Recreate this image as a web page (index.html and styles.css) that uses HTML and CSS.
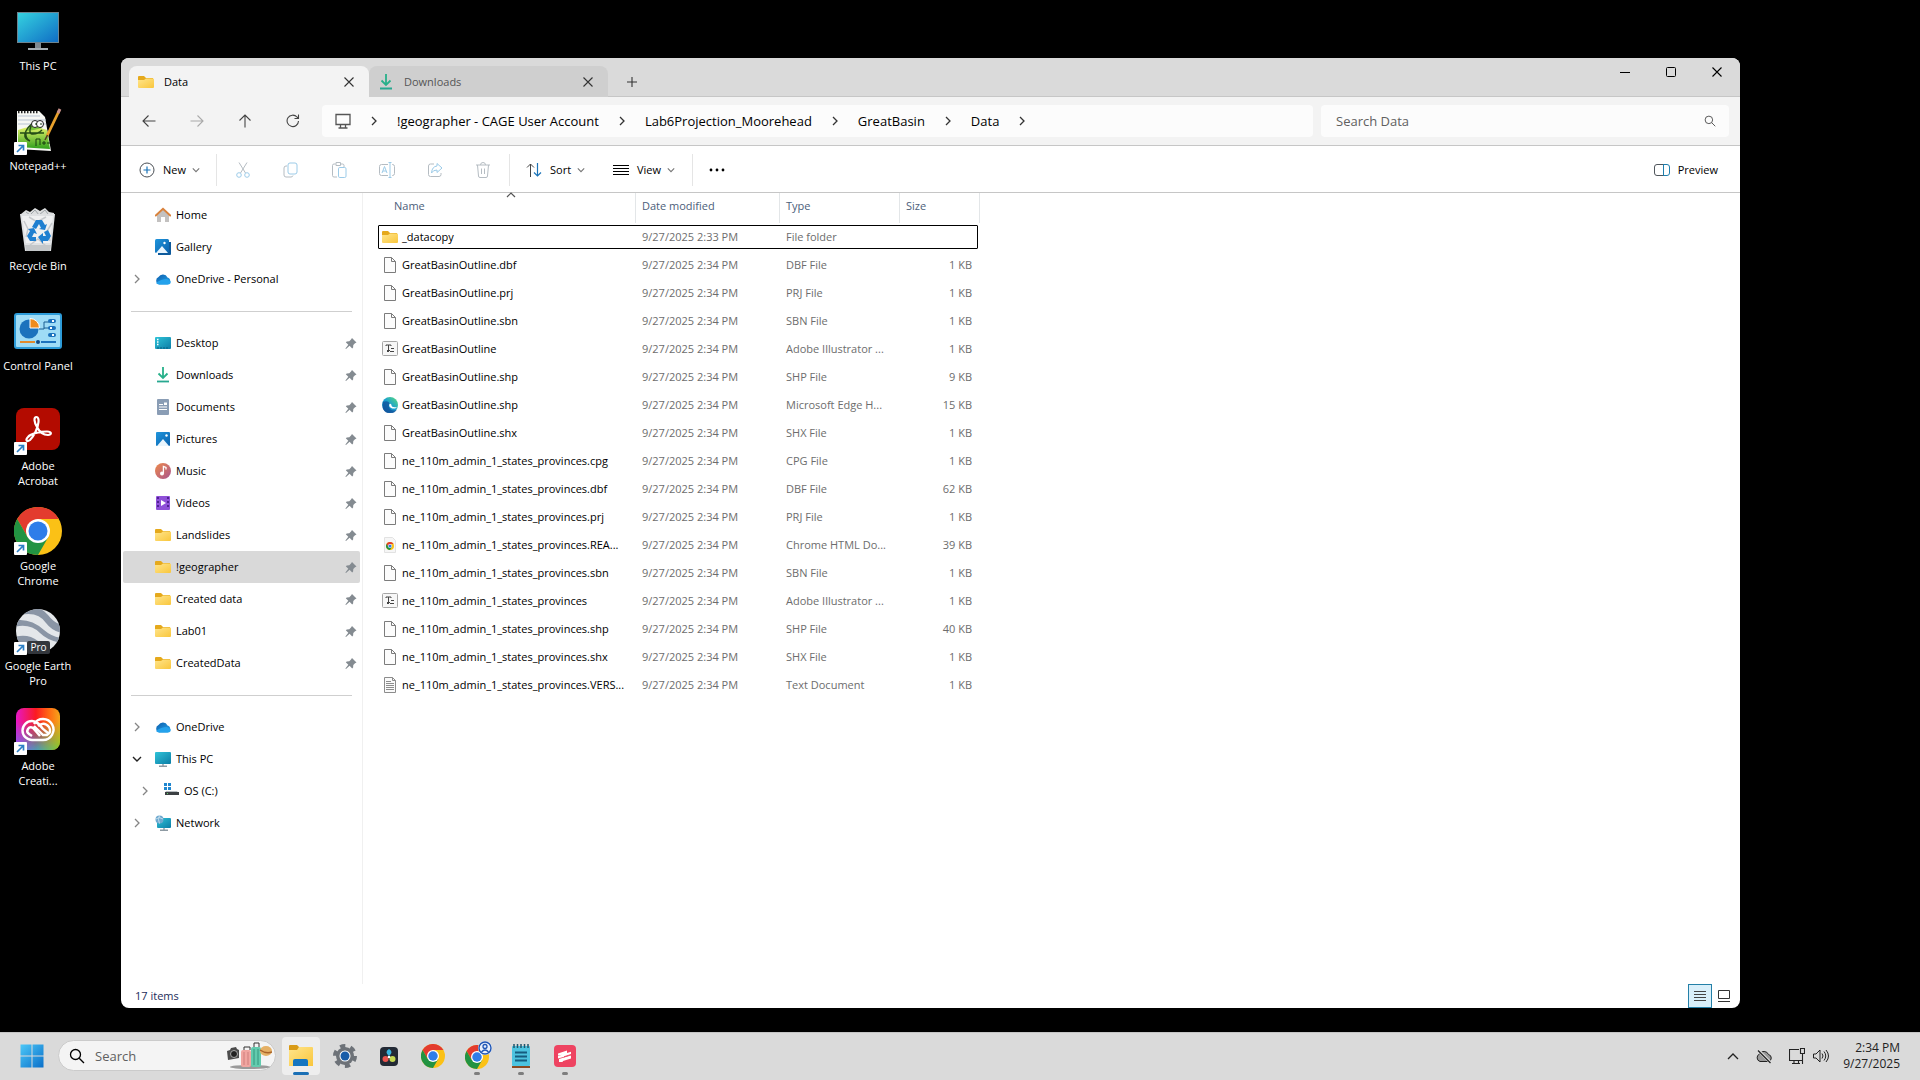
FILE: index.html
```html
<!DOCTYPE html>
<html lang="en">
<head>
<meta charset="utf-8">
<title>Data - File Explorer</title>
<link rel="stylesheet" href="styles.css">
</head>
<body>
<svg class="sprite" aria-hidden="true">
  <defs>
    <linearGradient id="g-folder" x1="0" y1="0" x2="1" y2="1"><stop offset="0" stop-color="#ffe58c"/><stop offset="1" stop-color="#f9c63c"/></linearGradient>
    <linearGradient id="g-screen" x1="0" y1="0" x2="1" y2="1"><stop offset="0" stop-color="#35d3e0"/><stop offset="1" stop-color="#0f6cc4"/></linearGradient>
    <linearGradient id="g-teal" x1="0" y1="0" x2="1" y2="1"><stop offset="0" stop-color="#2fc3d8"/><stop offset="1" stop-color="#0c7da6"/></linearGradient>
    <linearGradient id="g-blue" x1="0" y1="0" x2="1" y2="1"><stop offset="0" stop-color="#1f95dc"/><stop offset="1" stop-color="#0b62ae"/></linearGradient>
    <linearGradient id="g-cloud" x1="0" y1="0" x2="1" y2="1"><stop offset="0" stop-color="#0b5cad"/><stop offset="1" stop-color="#28a8ea"/></linearGradient>
    <linearGradient id="g-music" x1="0" y1="0" x2="1" y2="1"><stop offset="0" stop-color="#ee8a4a"/><stop offset="1" stop-color="#a95590"/></linearGradient>
    <linearGradient id="g-win" x1="0" y1="0" x2="1" y2="1"><stop offset="0" stop-color="#4cc8f8"/><stop offset="1" stop-color="#0a6fc9"/></linearGradient>
    <linearGradient id="g-edge" x1="0" y1="1" x2="1" y2="0"><stop offset="0" stop-color="#0c59a4"/><stop offset=".5" stop-color="#1a9fd0"/><stop offset="1" stop-color="#5ee07a"/></linearGradient>
    <linearGradient id="g-cc" x1="0" y1="0" x2="1" y2="0"><stop offset="0" stop-color="#e617c8"/><stop offset=".45" stop-color="#fb1a22"/><stop offset=".75" stop-color="#ff6a13"/><stop offset="1" stop-color="#f5a51b"/></linearGradient>
    <linearGradient id="g-cc2" x1="0" y1="0" x2="1" y2="0"><stop offset="0" stop-color="#6c6cff"/><stop offset=".5" stop-color="#2fb4c8"/><stop offset="1" stop-color="#72d32a"/></linearGradient>
    <linearGradient id="g-fade" x1="0" y1="0" x2="0" y2="1"><stop offset=".3" stop-color="#000"/><stop offset="1" stop-color="#fff"/></linearGradient>
    <linearGradient id="g-npp" x1="0" y1="0" x2="0" y2="1"><stop offset="0" stop-color="#e3f36b"/><stop offset="1" stop-color="#2e9f1b"/></linearGradient>
    <mask id="m-fade"><rect width="48" height="48" fill="url(#g-fade)"/></mask>
    <clipPath id="c-globe"><circle cx="24" cy="24" r="22"/></clipPath>
  </defs>

  <symbol id="folder" viewBox="0 0 16 16"><path d="M0 3a1 1 0 0 1 1-1h5l2 2h7v6H0z" fill="#e5a91c"/><path d="M0 6h6l2-1.500h7a1 1 0 0 1 1 1V13a1 1 0 0 1-1 1H1a1 1 0 0 1-1-1z" fill="url(#g-folder)"/></symbol>
  <symbol id="download" viewBox="0 0 16 16"><path d="M8 0v10.500M3.500 6.500 8 11l4.500-4.500" fill="none" stroke="#27b08a" stroke-width="1.800"/><path d="M2 14.500h12" stroke="#27a890" stroke-width="1.800"/></symbol>
  <symbol id="home" viewBox="0 0 16 16"><path d="M2 8l6-6 6 6v7h-4v-5H6v5H2z" fill="#c3c1c0"/><path d="M.800 8.500 8 1.800l7.200 6.700" fill="none" stroke="#d9823c" stroke-width="1.900" stroke-linecap="round"/></symbol>
  <symbol id="gallery" viewBox="0 0 16 16"><path d="M13 3h3v12a1 1 0 0 1-1 1H3v-2z" fill="#0d5a9c"/><rect width="14" height="14" rx="1.500" fill="url(#g-blue)"/><path d="M1 14 7 7l6 7z" fill="#e9f5fd"/><circle cx="9.500" cy="4" r="1.200" fill="#fff"/></symbol>
  <symbol id="cloud" viewBox="0 0 16 16"><path d="M4 13.500A4 4 0 0 1 3.500 6 5 5 0 0 1 12.500 6.500 3.600 3.600 0 0 1 12.500 13.500z" fill="url(#g-cloud)"/><path d="M1 12Q6 8 12 8l3.800 2.500a3 3 0 0 1-3.300 3H4A4 4 0 0 1 1 12z" fill="#24a2ec"/></symbol>
  <symbol id="desktop" viewBox="0 0 16 16"><rect y="2" width="16" height="12" rx="1" fill="url(#g-teal)"/><path d="M2 4.500h1.500M2 7h1.500M2 9.500h1.500" stroke="#fff" stroke-width="1.300"/><path d="M2 13h12" stroke="#075d80" stroke-dasharray="2 1"/></symbol>
  <symbol id="document" viewBox="0 0 16 16"><rect x="2" y="0" width="12" height="16" rx="1" fill="#8a9db5"/><path d="M4 5.500h4M4 8h8M4 10.500h8" stroke="#fff" stroke-width="1.200"/><path d="M9 3.500h3v2.500H9z" fill="#fff"/></symbol>
  <symbol id="pictures" viewBox="0 0 16 16"><rect x="1" y="1" width="14" height="14" rx="1" fill="url(#g-blue)"/><path d="M2 15 8 8l6 7z" fill="#e9f5fd"/><circle cx="11.500" cy="4.500" r="1.200" fill="#fff"/></symbol>
  <symbol id="music" viewBox="0 0 16 16"><circle cx="8" cy="8" r="8" fill="url(#g-music)"/><circle cx="7" cy="10.500" r="2" fill="#fff"/><path d="M8.400 10.500V3.500l2.600 1v2" fill="none" stroke="#fff" stroke-width="1.300"/></symbol>
  <symbol id="videos" viewBox="0 0 16 16"><rect x="1" y="1" width="14" height="14" rx="1" fill="#8f50d8"/><path d="M3 2v12M13 2v12" stroke="#4b1d8c" stroke-width="1.800" stroke-dasharray="2 2"/><path d="M6 5v6l5-3z" fill="#fff"/></symbol>
  <symbol id="pc" viewBox="0 0 16 16"><path d="M4 15.300h8M8 13v2" stroke="#8e9aa3" stroke-width="1.400"/><rect y="1" width="16" height="12" rx="1" fill="url(#g-teal)"/></symbol>
  <symbol id="drive" viewBox="0 0 16 16"><path d="M1 0h3v3H1zM5 0h3v3H5zM1 4h3v3H1zM5 4h3v3H5z" fill="#1f86cf"/><path d="M3 8h11l1.500 2H2z" fill="#b7bcc0"/><rect x="2" y="9" width="14" height="3" fill="#3c4043"/><path d="M4 10.500h1" stroke="#5fd66a"/></symbol>
  <symbol id="network" viewBox="0 0 16 16"><path d="M5 15.300h8M9 13v2" stroke="#8e9aa3" stroke-width="1.400"/><rect x="2" y="3" width="14" height="10" rx="1" fill="url(#g-teal)"/><circle cx="4.500" cy="4.500" r="4" fill="#6ea9cf"/><path d="M1 4q3-3 7 0M4.500.500q-2 4 0 8" fill="none" stroke="#d3e7f3" stroke-width=".8"/></symbol>
  <symbol id="pin" viewBox="0 0 12 12"><path d="M7 1l4.500 4.500-1.500.700-1.700 1.700-.200 2.600-.900.900-2.600-2.600L1 12l-.600-.600L3.300 7.800.800 5.300l1-.900 2.500-.200L6 2.500z" fill="#848b91"/></symbol>
  <symbol id="chev" viewBox="0 0 10 10"><path d="M3 1l4 4-4 4" fill="none" stroke="currentColor" stroke-width="1.300"/></symbol>
  <symbol id="chevdown" viewBox="0 0 10 10"><path d="M1 3l4 4 4-4" fill="none" stroke="currentColor" stroke-width="1.400"/></symbol>
  <symbol id="chevup" viewBox="0 0 10 10"><path d="M1 7l4-4 4 4" fill="none" stroke="currentColor" stroke-width="1.200"/></symbol>
  <symbol id="x" viewBox="0 0 10 10"><path d="M.500.500l9 9m0-9l-9 9" stroke="currentColor" stroke-width="1.100"/></symbol>
  <symbol id="plus" viewBox="0 0 10 10"><path d="M5 0v10M0 5h10" stroke="currentColor" stroke-width="1.100"/></symbol>
  <symbol id="page" viewBox="0 0 16 16"><path d="M2.500.500h7l4 4v11h-11z" fill="#fcfcfc" stroke="#7c7c7c"/><path d="M9.500.500v4h4" fill="none" stroke="#7c7c7c"/></symbol>
  <symbol id="textdoc" viewBox="0 0 16 16"><path d="M2.500.500h8l3 3v12h-11z" fill="#fafafa" stroke="#8c8c8c"/><path d="M10.500.500v3h3M4 4.500h5M4 6.500h8M4 8.500h8M4 10.500h8M4 12.500h8" fill="none" stroke="#8c8c8c"/></symbol>
  <symbol id="illus" viewBox="0 0 16 16"><rect x=".5" y=".5" width="15" height="14" rx="1" fill="#f7f7f7" stroke="#a6a6a6"/><path d="M4 5V4h5v1M6.500 4v5M5 9.500h3M9 7.500h3M8 10.500h4M5 10.500h2" fill="none" stroke="#444"/></symbol>
  <symbol id="edge" viewBox="0 0 16 16"><circle cx="8" cy="8" r="8" fill="url(#g-edge)"/><path d="M1 5c4-2 7 0 6.500 2.500C6 9 7 13 11 13.500c2 .2 3-.5 4-1A8 8 0 0 1 1 12z" fill="#10509a" opacity=".75"/><path d="M7.500 7c-1 2 .500 4.500 4 4.500 2 0 3.500-.800 4.300-1.600-.8 1-1.500.300-3 .300-2 0-3.300-.700-3.300-2C9.500 7.500 8.500 6 7.500 7z" fill="#fff"/></symbol>
  <symbol id="chrome" viewBox="0 0 48 48"><circle cx="24" cy="24" r="24" fill="#fbc116"/><path d="M24 12H44.800A24 24 0 0 0 3.200 12L13.600 30z" fill="#e33b2e"/><path d="M3.200 12A24 24 0 0 0 24 48L34.400 30 13.600 30z" fill="#229342"/><circle cx="24" cy="24" r="12" fill="#fff"/><circle cx="24" cy="24" r="9.500" fill="#2f7de9"/></symbol>
  <symbol id="htmldoc" viewBox="0 0 16 16"><path d="M2.500.500h8l3 3v12h-11z" fill="#f6f6f6" stroke="#e2e2e2"/><svg x="4" y="5" width="8" height="8" viewBox="0 0 48 48"><use href="#chrome"/></svg></symbol>
  <symbol id="shortcut" viewBox="0 0 13 13"><rect width="13" height="13" rx="1" fill="#fff"/><path d="M3 10 9 4M4.500 3.500h5v5" fill="none" stroke="#2b7fc6" stroke-width="1.700"/></symbol>
  <symbol id="search" viewBox="0 0 16 16"><circle cx="6.500" cy="6.500" r="5" fill="none" stroke="currentColor" stroke-width="1.300"/><path d="M10.200 10.200 15 15" stroke="currentColor" stroke-width="1.300"/></symbol>
  <symbol id="lines" viewBox="0 0 16 16"><path d="M0 3.500h16M0 6.500h16M0 9.500h16M0 12.500h16" stroke="currentColor"/></symbol>
</svg>

<main class="desktop">
  <ul class="shortcuts">
    <li><button class="shortcut"><svg class="art" viewBox="0 0 48 48"><path d="M21 35h6v6h-6z" fill="#7f8990"/><path d="M14 41h20v2H14z" fill="#a4adb3"/><rect x="3.500" y="5.500" width="41" height="30" fill="url(#g-screen)" stroke="#6d8490"/></svg><span>This PC</span></button></li>
    <li><button class="shortcut"><svg class="art" viewBox="0 0 48 48"><path d="M3 4h22l6 6 6 34-34-2z" fill="#f7f8f4"/><path d="M4 9h22M4 13h28M4 17h28" stroke="#b9c4d2"/><path d="M4 5h20" stroke="#222" stroke-width="2.500" stroke-dasharray="1.500 1.500"/><path d="M4 23q14-6 29 0l3 19-32-2z" fill="url(#g-npp)"/><path d="M13 24q4-8 12-8l3 5-8 2z" fill="#79c53b"/><path d="M6 26h24M14 33q-5-3-2-9 4-8 11-8M12 26q-1 6 4 8M17 19q-3 8 2 8t9-4" fill="none" stroke="#254d16" stroke-width="1.500"/><circle cx="21" cy="17" r="3.500" fill="#fff" stroke="#222"/><circle cx="26" cy="17" r="3.500" fill="#fff" stroke="#222"/><path d="M22 16v2M27 16v2M22 39v-7h4v6M28 36h4M30 34v4M33 36h3" stroke="#173d10" fill="none"/><path d="M45 4 33 29" stroke="#e8a12c" stroke-width="2.800"/><path d="M46 2l-2 4" stroke="#c9918a" stroke-width="3"/><path d="M33.500 28 31 33" stroke="#513b22" stroke-width="1.500"/><use href="#shortcut" y="35" width="13" height="13"/></svg><span>Notepad++</span></button></li>
    <li><button class="shortcut"><svg class="art" viewBox="0 0 48 48"><path d="M7 7l5-4 4 2 5-4 5 3 5-3 4 4 5 1v4H7z" fill="#dcdedf"/><path d="M12 5l4 3 5-5 4 5 6-5 3 4" fill="none" stroke="#9fa5a9"/><path d="M6 7h35l-4 37H11z" fill="#dfe1e3"/><path d="M8 9h31l-3 27H12z" fill="#eff0f1"/><path d="M10 14l4 8-2 8M38 16l-5 8 3 10M16 38l8-6 8 7M15 10l8 5 9-5" fill="none" stroke="#c6c9cc" stroke-width="1.500"/><path d="M11 38h26l-1 6H12z" fill="#c4c7c9"/><g fill="#1f7fd0"><path d="M18 20l4-7h6l3 5 2-1-2 6-6-1 2-1-2-4-3 5z"/><path d="M14 22l6-1 3 6-3-1-2 4h4v4h-6l-3-5 3-5z"/><path d="M24 30l5-4v3h3l-2-4 4-2 3 6-3 5h-5v3z"/></g></svg><span>Recycle Bin</span></button></li>
    <li><button class="shortcut"><svg class="art" viewBox="0 0 48 48"><rect y="6" width="48" height="36" rx="3" fill="#2d9bd8"/><rect x="2" y="8" width="44" height="32" rx="1" fill="#9fdcf6"/><circle cx="15" cy="22" r="9.500" fill="#1c72bd"/><path d="M16 21V11.500a9.500 9.500 0 0 1 9.500 9.500z" fill="#f08b1d" stroke="#fff"/><path d="M25 22h5v-7h5M30 21h5" fill="none" stroke="#1b5f92"/><rect x="34" y="12" width="8" height="4" rx="2" fill="#1c72bd"/><rect x="34" y="19" width="8" height="4" rx="2" fill="#1c72bd"/><rect x="34" y="26" width="8" height="4" rx="2" fill="#1c72bd"/><path d="M38 14h2M36 21h2M38 28h2" stroke="#fff" stroke-width="2"/><path d="M6 35h15" stroke="#e08a2c" stroke-width="2"/><path d="M27 35h15" stroke="#1c72bd" stroke-width="2"/><circle cx="24" cy="35" r="2" fill="#124c86"/></svg><span>Control Panel</span></button></li>
    <li><button class="shortcut"><svg class="art" viewBox="0 0 48 48"><rect x="2" y="1" width="44" height="42" rx="8" fill="#b30b00"/><path d="M22.500 10c-3 0-2.500 5 .500 10 2 4 6 8 11 8 4 0 4-3.500-1-3.500-7 0-16 2-19 5.500-3 3-1 5.500 2 3 4-4 8-12 8.500-18 .300-3-.5-5-2-5z" fill="none" stroke="#fff" stroke-width="2.200"/><use href="#shortcut" y="35" width="13" height="13"/></svg><span>Adobe<br>Acrobat</span></button></li>
    <li><button class="shortcut"><svg class="art" viewBox="0 0 48 48"><use href="#chrome"/><use href="#shortcut" y="35" width="13" height="13"/></svg><span>Google<br>Chrome</span></button></li>
    <li><button class="shortcut"><svg class="art" viewBox="0 0 48 48"><g clip-path="url(#c-globe)"><rect width="48" height="48" fill="#e4e7ea"/><path d="M6 8q18-4 26 8 6 8 16 10v-8q-8-2-14-10Q28 0 18 1zM0 20q16-4 26 6 8 8 22 10v-5q-10-1-18-8Q18 12 4 13zM0 30q14-4 24 4l10 8-8 8Q14 36 0 36z" fill="#8a95a5"/></g><rect x="13" y="34" width="23" height="13" rx="2" fill="#33373d"/><text x="24.500" y="44" class="pro">Pro</text><use href="#shortcut" y="35" width="13" height="13"/></svg><span>Google Earth<br>Pro</span></button></li>
    <li><button class="shortcut"><svg class="art" viewBox="0 0 48 48"><rect x="2" y="1" width="44" height="42" rx="8" fill="url(#g-cc)"/><rect x="2" y="1" width="44" height="42" rx="8" fill="url(#g-cc2)" mask="url(#m-fade)"/><path d="M19 33h-1a9 9 0 0 1 0-19c5 0 8 4 11 8l5 4M29 33a10.500 10.500 0 1 0-9-16M19 33h11M26 29l-7-8q-3-2-5 1t1 5l3 2M24 19q6-5 11 1 3 5-2 8h-4l-9-9" fill="none" stroke="#fff" stroke-width="2.400"/><use href="#shortcut" y="35" width="13" height="13"/></svg><span>Adobe<br>Creati...</span></button></li>
  </ul>

  <section class="window" aria-label="File Explorer">
    <header class="titlebar">
      <div class="tabs">
        <div class="tab tab-active"><svg class="i16"><use href="#folder"/></svg><span class="tab-name">Data</span><button class="tab-close" aria-label="Close Data"><svg class="i10"><use href="#x"/></svg></button></div>
        <div class="tab"><svg class="i16"><use href="#download"/></svg><span class="tab-name">Downloads</span><button class="tab-close" aria-label="Close Downloads"><svg class="i10"><use href="#x"/></svg></button></div>
        <button class="tab-new" aria-label="New tab"><svg class="i10"><use href="#plus"/></svg></button>
      </div>
      <div class="caption">
        <button aria-label="Minimize"><svg class="i10" viewBox="0 0 10 10"><path d="M0 5.500h10" stroke="#000"/></svg></button>
        <button aria-label="Maximize"><svg class="i10" viewBox="0 0 10 10"><rect x=".5" y=".5" width="9" height="9" rx="1" fill="none" stroke="#000"/></svg></button>
        <button aria-label="Close"><svg class="i10"><use href="#x"/></svg></button>
      </div>
    </header>

    <nav class="navbar" aria-label="Location">
      <div class="nav-buttons">
        <button aria-label="Back"><svg class="i14" viewBox="0 0 14 14"><path d="M13.500 7H1M6.500 1.500 1 7l5.500 5.500"/></svg></button>
        <button aria-label="Forward" disabled><svg class="i14" viewBox="0 0 14 14"><path d="M.500 7H13M7.500 1.500 13 7l-5.500 5.500"/></svg></button>
        <button aria-label="Up"><svg class="i14" viewBox="0 0 14 14"><path d="M7 13.500V1M1.500 6.500 7 1l5.500 5.500"/></svg></button>
        <button aria-label="Refresh"><svg class="i14" viewBox="0 0 14 14"><path d="M12.500 7A5.700 5.700 0 1 1 11 3l1.500 1.300M12.500.500v4h-4"/></svg></button>
      </div>
      <div class="address">
        <button aria-label="This PC"><svg class="i16" viewBox="0 0 16 16"><path d="M1 1.500h14v10H1zM5.500 12v2.500M10.500 12v2.500M3.500 15h9" fill="none" stroke="#555" stroke-width="1.300"/></svg></button>
        <svg class="i10 crumb-sep"><use href="#chev"/></svg><a href="#">!geographer - CAGE User Account</a>
        <svg class="i10 crumb-sep"><use href="#chev"/></svg><a href="#">Lab6Projection_Moorehead</a>
        <svg class="i10 crumb-sep"><use href="#chev"/></svg><a href="#">GreatBasin</a>
        <svg class="i10 crumb-sep"><use href="#chev"/></svg><a href="#">Data</a>
        <svg class="i10 crumb-sep"><use href="#chev"/></svg>
      </div>
      <label class="find"><input type="text" placeholder="Search Data" aria-label="Search Data"><svg class="i12"><use href="#search"/></svg></label>
    </nav>

    <div class="toolbar">
      <button class="tool tool-new"><svg class="i16" viewBox="0 0 16 16"><circle cx="8" cy="8" r="7" fill="none" stroke="#4a4f55"/><path d="M8 4.500v7M4.500 8h7" stroke="#1a73b8" stroke-width="1.200"/></svg><span>New</span><svg class="i8"><use href="#chevdown"/></svg></button>
      <span class="rule"></span>
      <div class="tool-icons">
        <button aria-label="Cut" disabled><svg class="i16" viewBox="0 0 16 16"><path d="M4 .500l6.500 10.500M12 .500 5.500 11" stroke="#b5bcc2"/><circle cx="4" cy="13" r="2.300" stroke="#9ccbe8"/><circle cx="12" cy="13" r="2.300" stroke="#9ccbe8"/></svg></button>
        <button aria-label="Copy" disabled><svg class="i16" viewBox="0 0 16 16"><path d="M4 4H3a2 2 0 0 0-2 2v7a2 2 0 0 0 2 2h5a2 2 0 0 0 2-1.500" stroke="#b5bcc2"/><rect x="5" y="1" width="9" height="11" rx="2" stroke="#9ccbe8"/></svg></button>
        <button aria-label="Paste" disabled><svg class="i16" viewBox="0 0 16 16"><path d="M6 15H3a1.500 1.500 0 0 1-1.500-1.500v-10A1.500 1.500 0 0 1 3 2h1.500M10 2h1.500A1.500 1.500 0 0 1 13 3.500V5M5 .500h4.500v3H5z" stroke="#b5bcc2"/><rect x="7.500" y="5.500" width="7.500" height="10" rx="1.300" stroke="#9ccbe8"/></svg></button>
        <button aria-label="Rename" disabled><svg class="i16" viewBox="0 0 16 16"><path d="M9 2.500H2.500a2 2 0 0 0-2 2v7a2 2 0 0 0 2 2H9M13 2.500h.500a2 2 0 0 1 2 2v7a2 2 0 0 1-2 2H13" stroke="#b5bcc2"/><path d="M11 .500v15M9.500.500h3M9.500 15.500h3M3 11l2.500-6.500L8 11M4 9h3" stroke="#9ccbe8"/></svg></button>
        <button aria-label="Share" disabled><svg class="i16" viewBox="0 0 16 16"><path d="M7 2H3.500a2 2 0 0 0-2 2v8.500a2 2 0 0 0 2 2H12a2 2 0 0 0 2-2V11" stroke="#b5bcc2"/><path d="M10 1.500 15 6l-5 4.500V8Q6 8 4.500 11 5 4.500 10 4z" stroke="#9ccbe8"/></svg></button>
        <button aria-label="Delete" disabled><svg class="i16" viewBox="0 0 16 16"><path d="M1 3h14M5.500 3a2.500 2.500 0 0 1 5 0M2.500 3l1 11a1.500 1.500 0 0 0 1.500 1.500h6a1.500 1.500 0 0 0 1.500-1.500l1-11M6.500 6.500v5.500M9.500 6.500v5.500" stroke="#b5bcc2"/></svg></button>
      </div>
      <span class="rule"></span>
      <button class="tool tool-sort"><svg class="i16" viewBox="0 0 16 16"><path d="M4.500 15V2M1 5.500 4.500 2 8 5.500" fill="none" stroke="#444"/><path d="M11.500 1v13M8 10.500l3.500 3.500 3.500-3.500" fill="none" stroke="#1a73b8" stroke-width="1.200"/></svg><span>Sort</span><svg class="i8"><use href="#chevdown"/></svg></button>
      <button class="tool tool-view"><svg class="i16"><use href="#lines"/></svg><span>View</span><svg class="i8"><use href="#chevdown"/></svg></button>
      <span class="rule"></span>
      <button class="tool tool-more" aria-label="See more"><svg class="i16" viewBox="0 0 16 16"><circle cx="2" cy="8" r="1.400"/><circle cx="8" cy="8" r="1.400"/><circle cx="14" cy="8" r="1.400"/></svg></button>
      <button class="tool tool-preview"><svg class="i16" viewBox="0 0 16 16"><path d="M10 2.500H3a2.500 2.500 0 0 0-2.500 2.500v6A2.500 2.500 0 0 0 3 13.500h7" fill="none" stroke="#50565c"/><path d="M9.500 2.500H13a2.500 2.500 0 0 1 2.500 2.500v6a2.500 2.500 0 0 1-2.500 2.500H9.500z" fill="none" stroke="#1e7fae"/></svg><span>Preview</span></button>
    </div>

    <div class="panes">
      <aside class="sidebar">
        <ul>
          <li><a href="#"><span class="twist"></span><svg class="i16"><use href="#home"/></svg><span>Home</span></a></li>
          <li><a href="#"><span class="twist"></span><svg class="i16"><use href="#gallery"/></svg><span>Gallery</span></a></li>
          <li><a href="#"><svg class="twist"><use href="#chev"/></svg><svg class="i16"><use href="#cloud"/></svg><span>OneDrive - Personal</span></a></li>
        </ul>
        <hr>
        <ul>
          <li><a href="#"><span class="twist"></span><svg class="i16"><use href="#desktop"/></svg><span>Desktop</span><svg class="pin"><use href="#pin"/></svg></a></li>
          <li><a href="#"><span class="twist"></span><svg class="i16"><use href="#download"/></svg><span>Downloads</span><svg class="pin"><use href="#pin"/></svg></a></li>
          <li><a href="#"><span class="twist"></span><svg class="i16"><use href="#document"/></svg><span>Documents</span><svg class="pin"><use href="#pin"/></svg></a></li>
          <li><a href="#"><span class="twist"></span><svg class="i16"><use href="#pictures"/></svg><span>Pictures</span><svg class="pin"><use href="#pin"/></svg></a></li>
          <li><a href="#"><span class="twist"></span><svg class="i16"><use href="#music"/></svg><span>Music</span><svg class="pin"><use href="#pin"/></svg></a></li>
          <li><a href="#"><span class="twist"></span><svg class="i16"><use href="#videos"/></svg><span>Videos</span><svg class="pin"><use href="#pin"/></svg></a></li>
          <li><a href="#"><span class="twist"></span><svg class="i16"><use href="#folder"/></svg><span>Landslides</span><svg class="pin"><use href="#pin"/></svg></a></li>
          <li><a href="#" class="current"><span class="twist"></span><svg class="i16"><use href="#folder"/></svg><span>!geographer</span><svg class="pin"><use href="#pin"/></svg></a></li>
          <li><a href="#"><span class="twist"></span><svg class="i16"><use href="#folder"/></svg><span>Created data</span><svg class="pin"><use href="#pin"/></svg></a></li>
          <li><a href="#"><span class="twist"></span><svg class="i16"><use href="#folder"/></svg><span>Lab01</span><svg class="pin"><use href="#pin"/></svg></a></li>
          <li><a href="#"><span class="twist"></span><svg class="i16"><use href="#folder"/></svg><span>CreatedData</span><svg class="pin"><use href="#pin"/></svg></a></li>
        </ul>
        <hr>
        <ul>
          <li><a href="#"><svg class="twist"><use href="#chev"/></svg><svg class="i16"><use href="#cloud"/></svg><span>OneDrive</span></a></li>
          <li><a href="#"><svg class="twist twist-open"><use href="#chevdown"/></svg><svg class="i16"><use href="#pc"/></svg><span>This PC</span></a></li>
          <li><a href="#" class="nested"><svg class="twist"><use href="#chev"/></svg><svg class="i16"><use href="#drive"/></svg><span>OS (C:)</span></a></li>
          <li><a href="#"><svg class="twist"><use href="#chev"/></svg><svg class="i16"><use href="#network"/></svg><span>Network</span></a></li>
        </ul>
      </aside>

      <div class="listing">
        <table class="files">
          <colgroup><col class="c-name"><col class="c-date"><col class="c-type"><col class="c-size"></colgroup>
          <thead><tr><th scope="col" class="sorted">Name<svg class="i10 sort-mark"><use href="#chevup"/></svg></th><th scope="col">Date modified</th><th scope="col">Type</th><th scope="col">Size</th></tr></thead>
          <tbody>
            <tr class="focused"><td><span class="file"><svg class="i16"><use href="#folder"/></svg>_datacopy</span></td><td>9/27/2025 2:33 PM</td><td>File folder</td><td></td></tr>
            <tr><td><span class="file"><svg class="i16"><use href="#page"/></svg>GreatBasinOutline.dbf</span></td><td>9/27/2025 2:34 PM</td><td>DBF File</td><td>1 KB</td></tr>
            <tr><td><span class="file"><svg class="i16"><use href="#page"/></svg>GreatBasinOutline.prj</span></td><td>9/27/2025 2:34 PM</td><td>PRJ File</td><td>1 KB</td></tr>
            <tr><td><span class="file"><svg class="i16"><use href="#page"/></svg>GreatBasinOutline.sbn</span></td><td>9/27/2025 2:34 PM</td><td>SBN File</td><td>1 KB</td></tr>
            <tr><td><span class="file"><svg class="i16"><use href="#illus"/></svg>GreatBasinOutline</span></td><td>9/27/2025 2:34 PM</td><td>Adobe Illustrator ...</td><td>1 KB</td></tr>
            <tr><td><span class="file"><svg class="i16"><use href="#page"/></svg>GreatBasinOutline.shp</span></td><td>9/27/2025 2:34 PM</td><td>SHP File</td><td>9 KB</td></tr>
            <tr><td><span class="file"><svg class="i16"><use href="#edge"/></svg>GreatBasinOutline.shp</span></td><td>9/27/2025 2:34 PM</td><td>Microsoft Edge H...</td><td>15 KB</td></tr>
            <tr><td><span class="file"><svg class="i16"><use href="#page"/></svg>GreatBasinOutline.shx</span></td><td>9/27/2025 2:34 PM</td><td>SHX File</td><td>1 KB</td></tr>
            <tr><td><span class="file"><svg class="i16"><use href="#page"/></svg>ne_110m_admin_1_states_provinces.cpg</span></td><td>9/27/2025 2:34 PM</td><td>CPG File</td><td>1 KB</td></tr>
            <tr><td><span class="file"><svg class="i16"><use href="#page"/></svg>ne_110m_admin_1_states_provinces.dbf</span></td><td>9/27/2025 2:34 PM</td><td>DBF File</td><td>62 KB</td></tr>
            <tr><td><span class="file"><svg class="i16"><use href="#page"/></svg>ne_110m_admin_1_states_provinces.prj</span></td><td>9/27/2025 2:34 PM</td><td>PRJ File</td><td>1 KB</td></tr>
            <tr><td><span class="file"><svg class="i16"><use href="#htmldoc"/></svg>ne_110m_admin_1_states_provinces.REA...</span></td><td>9/27/2025 2:34 PM</td><td>Chrome HTML Do...</td><td>39 KB</td></tr>
            <tr><td><span class="file"><svg class="i16"><use href="#page"/></svg>ne_110m_admin_1_states_provinces.sbn</span></td><td>9/27/2025 2:34 PM</td><td>SBN File</td><td>1 KB</td></tr>
            <tr><td><span class="file"><svg class="i16"><use href="#illus"/></svg>ne_110m_admin_1_states_provinces</span></td><td>9/27/2025 2:34 PM</td><td>Adobe Illustrator ...</td><td>1 KB</td></tr>
            <tr><td><span class="file"><svg class="i16"><use href="#page"/></svg>ne_110m_admin_1_states_provinces.shp</span></td><td>9/27/2025 2:34 PM</td><td>SHP File</td><td>40 KB</td></tr>
            <tr><td><span class="file"><svg class="i16"><use href="#page"/></svg>ne_110m_admin_1_states_provinces.shx</span></td><td>9/27/2025 2:34 PM</td><td>SHX File</td><td>1 KB</td></tr>
            <tr><td><span class="file"><svg class="i16"><use href="#textdoc"/></svg>ne_110m_admin_1_states_provinces.VERS...</span></td><td>9/27/2025 2:34 PM</td><td>Text Document</td><td>1 KB</td></tr>
          </tbody>
        </table>
      </div>
    </div>

    <footer class="status">
      <span>17 items</span>
      <div class="view-modes">
        <button class="mode mode-on" aria-label="Details view"><svg class="i12" viewBox="0 0 12 12"><path d="M0 1.500h12M0 4.500h12M0 7.500h12M0 10.500h12" stroke="#444"/></svg></button>
        <button class="mode" aria-label="Large icons view"><svg class="i12" viewBox="0 0 12 12"><path d="M.500.500h11v8H.500zM0 11.500h12" fill="none" stroke="#333"/></svg></button>
      </div>
    </footer>
  </section>
</main>

<footer class="taskbar">
  <div class="apps">
    <button class="start" aria-label="Start"><svg class="i24" viewBox="0 0 24 24"><path d="M.500.500h11v11H.500zM12.500.500h11v11h-11zM.500 12.500h11v11H.500zM12.500 12.500h11v11h-11z" fill="url(#g-win)"/></svg></button>
    <label class="task-search"><svg class="i16"><use href="#search"/></svg><input type="text" placeholder="Search" aria-label="Search"><svg class="travel" viewBox="0 0 46 28"><ellipse cx="24" cy="25" rx="20" ry="2" fill="#9a9a9a"/><path d="M1 9l3-1 1-2 5-1 1 2 2 1v8L2 18z" fill="#4c4c4c"/><circle cx="8" cy="12" r="3.500" fill="#222" stroke="#aaa"/><path d="M18 8V5h6v3M28 5V1h5v4" fill="none" stroke="#333"/><rect x="15" y="8" width="10" height="17" rx="2" fill="#f0a5a0"/><path d="M18 10v13M22 10v13" stroke="#cf7f7c"/><rect x="25" y="5" width="10" height="20" rx="2" fill="#62cbae"/><path d="M28 7v16M32 7v16" stroke="#35967f"/><ellipse cx="40" cy="9" rx="6" ry="5" fill="#e5b065"/><path d="M34 8q6 4 12 2" fill="none" stroke="#a8632a" stroke-width="1.500"/></svg></label>
    <button class="app app-on" aria-label="File Explorer"><svg class="i24" viewBox="0 0 24 24"><path d="M0 2a1 1 0 0 1 1-1h7l2 2v4H0z" fill="#d99b17"/><path d="M0 6h8l2-3h13a1 1 0 0 1 1 1v18H0z" fill="url(#g-folder)"/><path d="M4 22v-5a2 2 0 0 1 2-2h11a2 2 0 0 1 2 2v5z" fill="#1475c0"/></svg></button>
    <button class="app" aria-label="Settings"><svg class="i24" viewBox="0 0 24 24"><circle cx="12" cy="12" r="9" fill="#6d7278"/><circle cx="12" cy="12" r="10" fill="none" stroke="#6d7278" stroke-width="4" stroke-dasharray="5.240 5.232"/><circle cx="12" cy="12" r="5.500" fill="#fff"/><circle cx="12" cy="12" r="4.500" fill="#175ca8"/></svg></button>
    <button class="app" aria-label="DaVinci Resolve"><svg class="i24" viewBox="0 0 24 24"><rect x="3" y="3" width="18" height="19" rx="4" fill="#232a35"/><path d="M12 12Q7 8 12 5q5 3 0 7z" fill="#38b4e0"/><circle cx="8.500" cy="15" r="3" fill="#e9524d"/><circle cx="15.500" cy="15" r="3" fill="#c5d951"/><circle cx="12" cy="13" r="1.300" fill="#fff"/></svg></button>
    <button class="app" aria-label="Google Chrome"><svg class="i24"><use href="#chrome"/></svg></button>
    <button class="app app-open" aria-label="Google Chrome, second profile"><svg class="i30" viewBox="0 0 30 30"><svg x="3" y="4" width="24" height="24" viewBox="0 0 48 48"><use href="#chrome"/></svg><circle cx="23" cy="7" r="7" fill="#e8effb"/><circle cx="23" cy="7" r="6" fill="none" stroke="#1f56b5" stroke-width="1.400"/><circle cx="23" cy="5.500" r="2" fill="none" stroke="#1f56b5" stroke-width="1.300"/><path d="M19.500 11q3.500-4 7 0" fill="none" stroke="#1f56b5" stroke-width="1.300"/></svg></button>
    <button class="app app-open" aria-label="Notepad"><svg class="i24" viewBox="0 0 24 24"><rect x="3" y="2" width="18" height="20" rx="1" fill="#4cc3df"/><path d="M5 0v4M8.500 0v4M12 0v4M15.500 0v4M19 0v4" stroke="#21546b" stroke-width="1.500"/><path d="M6 8.500h12M6 12.500h12M6 16.500h12" stroke="#155d7f" stroke-width="1.800"/><path d="M3 23h18" stroke="#8b4a22" stroke-width="2"/></svg></button>
    <button class="app app-open" aria-label="Screen recorder"><svg class="i24" viewBox="0 0 24 24"><rect x="1" y="1" width="22" height="22" rx="4" fill="#ee4361"/><path d="M5 9.500 14 6.500v2.500l4-1.200v3L5 14.500v-2.500l4-1.200-4 .7zM6 15l12-3.500v3L10 17l-.500 1L6 18z" fill="#fff"/><path d="M11 12.800l7-2.300" stroke="#ee4361"/></svg></button>
  </div>
  <div class="tray">
    <button aria-label="Show hidden icons"><svg class="i12" viewBox="0 0 12 12"><path d="M1 9l5-5 5 5" fill="none" stroke="#222" stroke-width="1.300"/></svg></button>
    <button aria-label="OneDrive"><svg class="i16" viewBox="0 0 16 16"><path d="M4 13.500A4 4 0 0 1 3.500 6 5 5 0 0 1 12.500 6.500 3.600 3.600 0 0 1 12.500 13.500z" fill="#999" stroke="#222"/><path d="M2 2l13 13" stroke="#ddd" stroke-width="3"/><path d="M2 2.500 14.500 15" stroke="#222" stroke-width="1.300"/></svg></button>
    <button aria-label="Network"><svg class="i16" viewBox="0 0 16 16"><path d="M10 1.500H.500v11h13V9M5 13v2.500M9.500 13v2.500M3 15.500h8M11.500.500h4v5h-4zM13.500 6v10" fill="none" stroke="#222" stroke-width="1.100"/></svg></button>
    <button aria-label="Volume"><svg class="i16" viewBox="0 0 16 16"><path d="M.500 6h2.500l4-4v12l-4-4H.500zM9 5.500q2 2.500 0 5M11 3.500q3.500 4.500 0 9M13 2q5 6 0 12" fill="none" stroke="#222"/></svg></button>
    <button class="clock"><time>2:34 PM</time><time>9/27/2025</time></button>
  </div>
</footer>
</body>
</html>
```
FILE: styles.css
```css
* {
  box-sizing: border-box;
}

body {
  margin: 0;
  min-height: 100vh;
  display: grid;
  grid-template-rows: 1fr 48px;
  background: #000;
  color: #000;
  font: 11px/16px "Open Sans", "Noto Sans", sans-serif;
}

button,
input {
  margin: 0;
  padding: 0;
  border: 0;
  background: none;
  color: inherit;
  font: inherit;
}

a {
  color: inherit;
  text-decoration: none;
}

ul {
  margin: 0;
  padding: 0;
  list-style: none;
}

svg {
  display: block;
  flex: none;
}

.sprite { position: absolute; width: 0; height: 0; }
.i8 { width: 8px; height: 8px; }
.i10 { width: 10px; height: 10px; }
.i12 { width: 12px; height: 12px; }
.i14 { width: 14px; height: 14px; }
.i16 { width: 16px; height: 16px; }
.i24 { width: 24px; height: 24px; }
.i30 { width: 30px; height: 30px; }

/* Desktop */
.desktop {
  position: relative;
}

.shortcuts {
  width: 76px;
  padding-top: 7px;
}

.shortcut {
  width: 100%;
  height: 100px;
  display: flex;
  flex-direction: column;
  align-items: center;
  gap: 3px;
  color: #fff;
  line-height: 15px;
  white-space: nowrap;
}

.art {
  width: 48px;
  height: 48px;
}

.pro {
  fill: #fff;
  font-size: 10px;
  text-anchor: middle;
}

/* Explorer window */
.window {
  position: absolute;
  inset: 58px 180px 24px 121px;
  display: flex;
  flex-direction: column;
  border-radius: 8px;
  overflow: hidden;
  background: #fff;
}

.titlebar {
  height: 39px;
  flex: none;
  display: flex;
  justify-content: space-between;
  background: #dadada;
  border-bottom: 1px solid #c6c6c6;
}

.tabs {
  display: flex;
  align-items: flex-start;
  padding: 8px 0 0 8px;
}

.tab {
  width: 239px;
  height: 31px;
  display: flex;
  align-items: center;
  gap: 10px;
  padding: 0 12px 0 9px;
  border-radius: 8px 8px 0 0;
  background: #cfcfcf;
  color: #555;
}

.tab-active {
  width: 240px;
  background: #f3f3f3;
  color: #000;
}

.tab-name {
  flex: 1;
}

.tab-close {
  width: 16px;
  height: 16px;
  display: grid;
  place-items: center;
  color: #333;
}

.tab-new {
  width: 48px;
  height: 31px;
  display: grid;
  place-items: center;
  color: #333;
}

.caption {
  display: flex;
}

.caption button {
  width: 46px;
  height: 28px;
  display: grid;
  place-items: center;
  color: #000;
}

.navbar {
  height: 49px;
  flex: none;
  display: flex;
  align-items: center;
  gap: 8px;
  padding: 0 11px 0 4px;
  background: #f3f3f3;
  border-bottom: 1px solid #c6c6c6;
  font-size: 13px;
}

.nav-buttons {
  display: flex;
  width: 189px;
}

.nav-buttons button {
  width: 48px;
  height: 32px;
  flex: none;
  display: grid;
  place-items: center;
}

.nav-buttons path {
  fill: none;
  stroke: #444;
  stroke-width: 1.1;
}

.nav-buttons button:disabled path {
  stroke: #aaa;
}

.address,
.find {
  height: 32px;
  display: flex;
  align-items: center;
  border-radius: 4px;
  background: #fcfcfc;
}

.address {
  flex: 1;
  padding-left: 13px;
  gap: 18px;
}

.crumb-sep {
  color: #333;
}

.find {
  width: 408px;
  padding: 0 13px 0 15px;
  color: #555;
}

.find input {
  flex: 1;
  min-width: 0;
}

input::placeholder {
  color: #606060;
  opacity: 1;
}

.toolbar {
  height: 47px;
  flex: none;
  display: flex;
  align-items: center;
  padding: 2px 22px 0 18px;
  border-bottom: 1px solid #c6c6c6;
}

.tool {
  height: 32px;
  display: flex;
  align-items: center;
  gap: 8px;
}

.tool .i8 {
  color: #777;
  margin-left: -2px;
}

.tool-new { width: 77px; }
.tool-sort { width: 80px; padding-left: 16px; }
.tool-view { width: 102px; padding-left: 23px; }
.tool-more { padding-left: 16px; }
.tool-preview { margin-left: auto; }

.rule {
  width: 1px;
  height: 32px;
  background: #e5e5e5;
}

.tool-icons {
  display: flex;
  padding: 0 2px;
}

.tool-icons button {
  width: 48px;
  height: 32px;
  display: grid;
  place-items: center;
}

.tool-icons svg {
  fill: none;
}

.panes {
  flex: 1;
  min-height: 0;
  display: flex;
}

/* Navigation pane */
.sidebar {
  width: 242px;
  flex: none;
  padding: 6px 2px 0;
  border-right: 1px solid #f0f0f0;
}

.sidebar a {
  height: 32px;
  display: flex;
  align-items: center;
  padding: 0 3px 0 9px;
  border-radius: 2px;
}

.sidebar .nested {
  padding-left: 17px;
}

.sidebar .current {
  background: #d9d9d9;
}

.twist {
  width: 10px;
  height: 10px;
  margin-right: 13px;
  color: #858585;
}

.twist-open {
  color: #222;
}

.sidebar .i16 {
  margin-right: 5px;
}

.pin {
  width: 12px;
  height: 12px;
  margin-left: auto;
}

.sidebar hr {
  height: 1px;
  margin: 16px 8px 15px;
  border: 0;
  background: #cfcfcf;
}

/* File list */
.listing {
  flex: 1;
  min-width: 0;
  padding-left: 13px;
}

.files {
  width: 604px;
  table-layout: fixed;
  border-collapse: separate;
  border-spacing: 0;
}

.c-name { width: 260px; }
.c-date { width: 144px; }
.c-type { width: 120px; }
.c-size { width: 80px; }

.files th {
  height: 30px;
  padding: 0 6px 4px;
  border-right: 1px solid #e3e6e8;
  color: #4c607a;
  font-weight: 400;
  text-align: left;
}

.files .sorted {
  position: relative;
  padding-left: 18px;
}

.sort-mark {
  position: absolute;
  top: -3px;
  left: 50%;
  color: #555;
}

.files td {
  height: 28px;
  padding: 0 6px;
  color: #6d6d6d;
  white-space: nowrap;
}

.files td:first-child {
  color: #000;
}

.files td:last-child {
  padding-right: 8px;
  text-align: right;
}

.file {
  display: flex;
  align-items: center;
  gap: 4px;
}

.focused {
  outline: 1px solid #000;
  outline-offset: -3px;
  border-radius: 3px;
}

.status {
  height: 24px;
  flex: none;
  display: flex;
  align-items: center;
  justify-content: space-between;
  padding: 0 4px 0 14px;
  color: #1c2c5a;
}

.view-modes {
  display: flex;
}

.mode {
  width: 24px;
  height: 24px;
  display: grid;
  place-items: center;
}

.mode-on {
  background: #d9effa;
  border: 1px solid #2480a8;
}

/* Taskbar */
.taskbar {
  display: flex;
  align-items: center;
  justify-content: space-between;
  padding: 0 20px 2px;
  background: #dadada;
  border-top: 1px solid #c4c4c4;
}

.apps {
  display: flex;
  align-items: center;
}

.start {
  margin-right: 14px;
}

.task-search {
  width: 218px;
  height: 31px;
  display: flex;
  align-items: center;
  gap: 10px;
  margin-right: 3px;
  padding: 0 3px 0 10px;
  border: 1px solid #cbcbcb;
  border-radius: 16px;
  background: #f4f4f4;
  font-size: 13px;
}

.task-search input {
  flex: 1;
  min-width: 0;
}

.travel {
  width: 46px;
  height: 28px;
}

.app {
  position: relative;
  width: 38px;
  height: 38px;
  margin: 0 3px;
  display: grid;
  place-items: center;
  border-radius: 4px;
}

.app-on {
  background: #eeeeee;
}

.app-on::after,
.app-open::after {
  content: "";
  position: absolute;
  bottom: 0;
  left: 16px;
  width: 6px;
  height: 3px;
  border-radius: 2px;
  background: #7d7d7d;
}

.app-on::after {
  left: 11px;
  width: 16px;
  background: #1a6fb5;
}

.tray {
  display: flex;
  align-items: center;
  color: #222;
}

.tray button {
  margin-right: 8px;
}

.tray button:nth-child(1),
.tray button:nth-child(2) {
  margin-right: 17px;
}

.tray .clock {
  display: flex;
  flex-direction: column;
  align-items: flex-end;
  margin: 0 0 0 6px;
  font-size: 12px;
}
```
